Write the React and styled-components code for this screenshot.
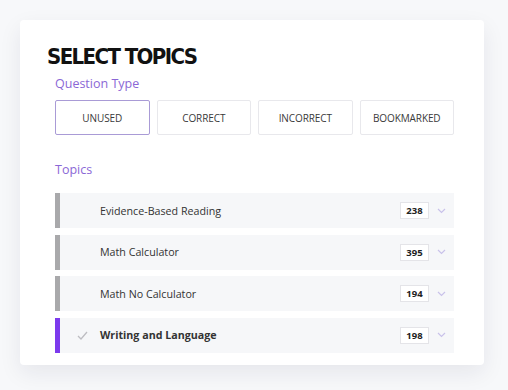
import React, { useState } from "react";
import styled, { createGlobalStyle } from "styled-components";

const Global = createGlobalStyle`
  html, body {
    margin: 0;
    padding: 0;
    background: #f7f8fa;
    font-family: "Open Sans", "Noto Sans", sans-serif;
  }
`;

const Page = styled.div`
  width: 508px;
  height: 390px;
  padding: 20px 24px 0 20px;
  box-sizing: border-box;
`;

const Card = styled.div`
  background: #fff;
  border-radius: 4px;
  box-shadow: 0 8px 22px rgba(30, 30, 60, 0.08);
  padding: 23px 30px 13px 27px;
  height: 345px;
  box-sizing: border-box;
`;

const Title = styled.h1`
  margin: 0;
  font-family: "DejaVu Sans Condensed", "DejaVu Sans", sans-serif;
  font-weight: 700;
  font-size: 22px;
  line-height: 28px;
  letter-spacing: -1.6px;
  color: #111;
`;

const Body = styled.div`
  padding-left: 8px;
`;

const Label = styled.div`
  color: #8b67d6;
  font-size: 12.5px;
  line-height: 18px;
  margin: ${({ $top }) => $top}px 0 0;
`;

const Types = styled.div`
  display: grid;
  grid-template-columns: repeat(4, 1fr);
  gap: 7px;
  margin-top: 7px;
`;

const TypeButton = styled.button`
  height: 35px;
  background: #fff;
  border: 1px solid ${({ $active }) => ($active ? "#a99bd6" : "#e8e8ec")};
  border-radius: 2px;
  font-family: "Open Sans", "Noto Sans", sans-serif;
  font-size: 10px;
  color: #3a3a3a;
  text-transform: uppercase;
  letter-spacing: -0.1px;
  cursor: pointer;
  padding: 0;
`;

const List = styled.div`
  display: flex;
  flex-direction: column;
  gap: 6.6px;
  margin-top: 14px;
`;

const Row = styled.div`
  display: flex;
  align-items: center;
  height: 35px;
  background: #f6f7f9;
`;

const Bar = styled.div`
  width: 5px;
  align-self: stretch;
  background: ${({ $on }) => ($on ? "#7c3aed" : "#a9a9ab")};
`;

const Check = styled.div`
  width: 40px;
  display: flex;
  justify-content: center;
  padding-left: 4px;
  box-sizing: border-box;
  color: #b8b8bc;
`;

const Name = styled.div`
  flex: 1;
  font-size: 10.7px;
  color: #333;
  font-weight: ${({ $on }) => ($on ? 700 : 400)};
`;

const Count = styled.span`
  font-size: 9.5px;
  font-weight: 700;
  color: #222;
  background: #fff;
  border: 1px solid #e4e4e8;
  width: 27px;
  height: 15px;
  line-height: 15px;
  text-align: center;
`;

const Chevron = styled.div`
  width: 24px;
  display: flex;
  justify-content: center;
  margin-right: 1px;
`;

const topics = [
  { name: "Evidence-Based Reading", count: 238 },
  { name: "Math Calculator", count: 395 },
  { name: "Math No Calculator", count: 194 },
  { name: "Writing and Language", count: 198, on: true },
];

export default function App() {
  const [type, setType] = useState("Unused");
  return (
    <Page>
      <Global />
      <Card>
        <Title>SELECT TOPICS</Title>
        <Body>
          <Label $top={4}>Question Type</Label>
          <Types>
            {["Unused", "Correct", "Incorrect", "Bookmarked"].map((t) => (
              <TypeButton key={t} $active={t === type} onClick={() => setType(t)}>
                {t}
              </TypeButton>
            ))}
          </Types>
          <Label $top={26}>Topics</Label>
          <List>
            {topics.map((t) => (
              <Row key={t.name}>
                <Bar $on={t.on} />
                <Check>
                  {t.on && (
                    <svg width="11" height="9" viewBox="0 0 11 9">
                      <path d="M1 5l3 3 6-7" fill="none" stroke="#bdbdc2" strokeWidth="1.3" />
                    </svg>
                  )}
                </Check>
                <Name $on={t.on}>{t.name}</Name>
                <Count>{t.count}</Count>
                <Chevron>
                  <svg width="9" height="6" viewBox="0 0 9 6">
                    <path d="M1 1l3.5 3.5L8 1" fill="none" stroke="#c9c2ea" strokeWidth="1.2" />
                  </svg>
                </Chevron>
              </Row>
            ))}
          </List>
        </Body>
      </Card>
    </Page>
  );
}
